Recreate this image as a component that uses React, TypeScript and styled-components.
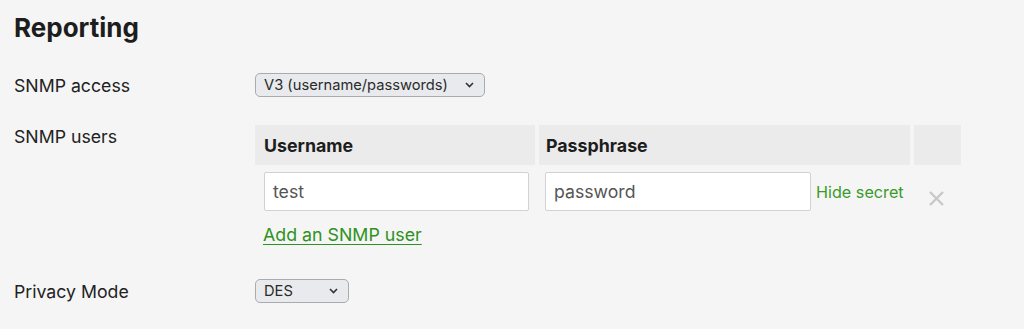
import styled, { createGlobalStyle } from "styled-components";

const GlobalStyle = createGlobalStyle`
  html, body {
    margin: 0;
    padding: 0;
    background: #f5f5f5;
    font-family: Inter, "Noto Sans", Arial, sans-serif;
    color: #222;
  }
`;

// ページ全体
const Page = styled.div`
  padding: 12px 14px 0 14px;
  width: 1024px;
  height: 329px;
  box-sizing: border-box;
  overflow: hidden;
`;

const Title = styled.h2`
  margin: 0 0 29px 0;
  font-size: 26px;
  font-weight: 700;
  line-height: 32px;
  color: #1d1d1d;
`;

const Row = styled.div<{ $gap?: number }>`
  display: grid;
  grid-template-columns: 241px 1fr;
  align-items: start;
  margin-bottom: ${(p) => p.$gap ?? 0}px;
`;

const Label = styled.div<{ $top?: number }>`
  font-size: 17.7px;
  line-height: 24px;
  padding-top: ${(p) => p.$top ?? 0}px;
  color: #222;
`;

const Select = styled.div<{ $width: number }>`
  display: flex;
  align-items: center;
  justify-content: space-between;
  width: ${(p) => p.$width}px;
  height: 24px;
  box-sizing: border-box;
  padding: 0 10px 0 8px;
  background: #e8eaed;
  border: 1px solid #a9abae;
  border-radius: 5px;
  font-size: 14.7px;
  color: #2a2a2a;
`;

const Chevron = () => (
  <svg width="9" height="6" viewBox="0 0 9 6">
    <path d="M1 1 L4.5 4.5 L8 1" fill="none" stroke="#333" strokeWidth="1.6" />
  </svg>
);

// テーブル
const Table = styled.div`
  display: grid;
  grid-template-columns: 280px 371px 47px;
  column-gap: 4px;
`;

const HeadCell = styled.div<{ $pad?: number }>`
  background: #ebebeb;
  height: 40px;
  display: flex;
  align-items: center;
  padding-left: ${(p) => p.$pad ?? 9}px;
  font-size: 17.8px;
  font-weight: 700;
  color: #1d1d1d;
`;

const Cell = styled.div<{ $pad?: number }>`
  display: flex;
  align-items: center;
  padding: 7px 0 0 ${(p) => p.$pad ?? 9}px;
`;

const Input = styled.div<{ $width: number }>`
  width: ${(p) => p.$width}px;
  height: 39px;
  box-sizing: border-box;
  background: #fff;
  border: 1px solid #d2d2d2;
  border-radius: 2px;
  display: flex;
  align-items: center;
  padding-left: 8px;
  font-size: 17.7px;
  color: #555;
`;

const SecretLink = styled.span`
  margin-left: 5px;
  font-size: 16.2px;
  color: #3b9a2b;
  white-space: nowrap;
`;

const RemoveCell = styled.div`
  display: flex;
  justify-content: center;
  padding-top: 25px;
  padding-right: 2px;
`;

const AddLink = styled.a`
  display: inline-block;
  margin: 12px 0 0 8px;
  font-size: 17.8px;
  line-height: 24px;
  color: #2e9121;
  text-decoration: underline;
  text-underline-offset: 3px;
`;

const App = () => {
  return (
    <Page>
      <GlobalStyle />
      <Title>Reporting</Title>
      <Row $gap={27}>
        <Label $top={1}>SNMP access</Label>
        <Select $width={230}>
          <span>V3 (username/passwords)</span>
          <Chevron />
        </Select>
      </Row>
      <Row $gap={32}>
        <Label $top={0}>SNMP users</Label>
        <div>
          <Table>
            <HeadCell>Username</HeadCell>
            <HeadCell $pad={7}>Passphrase</HeadCell>
            <HeadCell />
            <Cell>
              <Input $width={265}>test</Input>
            </Cell>
            <Cell $pad={6}>
              <Input $width={266}>password</Input>
              <SecretLink>Hide secret</SecretLink>
            </Cell>
            <RemoveCell>
              <svg width="17" height="17" viewBox="0 0 17 17">
                <path
                  d="M2 2 L15 15 M15 2 L2 15"
                  stroke="#c8c8c8"
                  strokeWidth="2.4"
                  fill="none"
                />
              </svg>
            </RemoveCell>
          </Table>
          <AddLink>Add an SNMP user</AddLink>
        </div>
      </Row>
      <Row>
        <Label $top={1}>Privacy Mode</Label>
        <Select $width={94}>
          <span>DES</span>
          <Chevron />
        </Select>
      </Row>
    </Page>
  );
};

export default App;
